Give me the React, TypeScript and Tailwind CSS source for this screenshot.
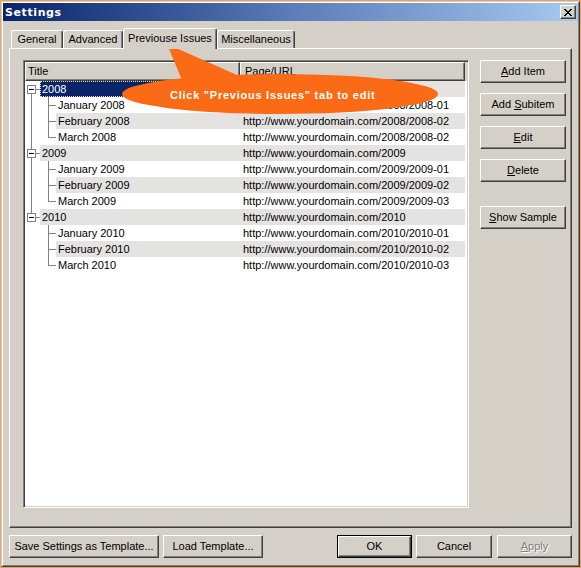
import React from "react";

const raised =
  "border border-t-white border-l-white border-r-[#404040] border-b-[#404040] shadow-[inset_-1px_-1px_0_#808080]";

type Row = {
  t: string;
  u: string;
  parent: boolean;
  first?: boolean;
  hasNext?: boolean;
  parentHasNext?: boolean;
  last?: boolean;
  sel?: boolean;
};

const rows: Row[] = [
  { t: "2008", u: "http://www.yourdomain.com/2008", parent: true, first: true, hasNext: true, sel: true },
  { t: "January 2008", u: "http://www.yourdomain.com/2008/2008-01", parent: false, parentHasNext: true },
  { t: "February 2008", u: "http://www.yourdomain.com/2008/2008-02", parent: false, parentHasNext: true },
  { t: "March 2008", u: "http://www.yourdomain.com/2008/2008-02", parent: false, parentHasNext: true, last: true },
  { t: "2009", u: "http://www.yourdomain.com/2009", parent: true, hasNext: true },
  { t: "January 2009", u: "http://www.yourdomain.com/2009/2009-01", parent: false, parentHasNext: true },
  { t: "February 2009", u: "http://www.yourdomain.com/2009/2009-02", parent: false, parentHasNext: true },
  { t: "March 2009", u: "http://www.yourdomain.com/2009/2009-03", parent: false, parentHasNext: true, last: true },
  { t: "2010", u: "http://www.yourdomain.com/2010", parent: true, hasNext: false },
  { t: "January 2010", u: "http://www.yourdomain.com/2010/2010-01", parent: false, parentHasNext: false },
  { t: "February 2010", u: "http://www.yourdomain.com/2010/2010-02", parent: false, parentHasNext: false },
  { t: "March 2010", u: "http://www.yourdomain.com/2010/2010-03", parent: false, parentHasNext: false, last: true },
];

function TreeGlyph({ r }: { r: Row }) {
  if (r.parent) {
    return (
      <svg width="15" height="16" viewBox="0 0 15 16" shapeRendering="crispEdges" className="shrink-0">
        {!r.first && <rect x="6" y="0" width="1" height="4" fill="#808080" />}
        {r.hasNext && <rect x="6" y="13" width="1" height="3" fill="#808080" />}
        <rect x="2" y="4" width="9" height="9" fill="#808080" />
        <rect x="3" y="5" width="7" height="7" fill="#ffffff" />
        <rect x="4" y="8" width="5" height="1" fill="#000000" />
        <rect x="11" y="8" width="4" height="1" fill="#808080" />
      </svg>
    );
  }
  return (
    <svg width="31" height="16" viewBox="0 0 31 16" shapeRendering="crispEdges" className="shrink-0">
      {r.parentHasNext && <rect x="6" y="0" width="1" height="16" fill="#808080" />}
      <rect x="23" y="0" width="1" height={r.last ? 9 : 16} fill="#808080" />
      <rect x="23" y="8" width="8" height="1" fill="#808080" />
    </svg>
  );
}

function Btn({
  children,
  w,
  className = "",
  isDefault = false,
  disabled = false,
}: {
  children: React.ReactNode;
  w: string;
  className?: string;
  isDefault?: boolean;
  disabled?: boolean;
}) {
  const textCls = disabled ? "text-[#808080] [text-shadow:1px_1px_0_#ffffff]" : "text-black";
  if (isDefault) {
    return (
      <div className={`${w} h-[23px] border border-black ${className}`}>
        <div className={`w-full h-full flex items-center justify-center bg-[#d4d0c8] ${raised} ${textCls}`}>
          {children}
        </div>
      </div>
    );
  }
  return (
    <div className={`${w} h-[23px] flex items-center justify-center bg-[#d4d0c8] ${raised} ${textCls} ${className}`}>
      {children}
    </div>
  );
}

export default function App() {
  return (
    <div
      className="relative w-[581px] h-[568px] border border-[#eca060] bg-[#d4d0c8] text-[11px] leading-[13px] text-black overflow-hidden"
      style={{ fontFamily: '"Liberation Sans", Arial, sans-serif' }}
    >
      <div className="w-full h-full border border-t-[#d4d0c8] border-l-[#d4d0c8] border-r-[#404040] border-b-[#404040]">
        <div className="w-full h-full border border-t-white border-l-white border-r-[#808080] border-b-[#808080] flex flex-col">
          {/* Title bar */}
          <div className="h-[18px] shrink-0 flex items-center justify-between pl-[2px] pr-[2px] bg-linear-to-r from-[#0a246a] via-[#5a7cb8] to-[#a6caf0]">
            <span
              className="text-white font-bold text-[11px] tracking-[0.6px]"
              style={{ fontFamily: '"DejaVu Sans", "Liberation Sans", sans-serif' }}
            >
              Settings
            </span>
            <div className={`w-[16px] h-[14px] bg-[#d4d0c8] ${raised} flex items-center justify-center`}>
              <svg width="8" height="7" viewBox="0 0 8 7" shapeRendering="crispEdges">
                <path d="M0 0h2v1h-2zM6 0h2v1h-2zM1 1h2v1h-2zM5 1h2v1h-2zM2 2h4v1h-4zM3 3h2v1h-2zM2 4h4v1h-4zM1 5h2v1h-2zM5 5h2v1h-2zM0 6h2v1h-2zM6 6h2v1h-2z" fill="#000" />
              </svg>
            </div>
          </div>

          {/* Tabs */}
          <div className="h-[27px] shrink-0 flex items-end pl-[8px]">
            <div className="w-[52px] h-[18px] flex items-center justify-center border-t border-l border-t-white border-l-white border-r border-r-[#404040] shadow-[inset_-1px_0_0_#808080] rounded-t-[3px]">
              General
            </div>
            <div className="w-[60px] h-[18px] flex items-center justify-center border-t border-l border-t-white border-l-white border-r border-r-[#404040] shadow-[inset_-1px_0_0_#808080] rounded-t-[3px]">
              Advanced
            </div>
            <div className="relative z-10 w-[94px] h-[21px] -mb-px pb-[2px] flex items-center justify-center bg-[#d4d0c8] border-t border-l border-t-white border-l-white border-r border-r-[#404040] shadow-[inset_-1px_0_0_#808080] rounded-t-[3px]">
              Previouse Issues
            </div>
            <div className="w-[78px] h-[18px] flex items-center justify-center border-t border-l border-t-white border-l-white border-r border-r-[#404040] shadow-[inset_-1px_0_0_#808080] rounded-t-[3px]">
              Miscellaneous
            </div>
          </div>

          {/* Panel */}
          <div className={`ml-[6px] w-[563px] h-[480px] shrink-0 ${raised} pl-[13px] pt-[11px] flex`}>
            {/* List view */}
            <div className="w-[446px] h-[448px] bg-white p-px border border-t-[#808080] border-l-[#808080] border-r-white border-b-white shadow-[inset_1px_1px_0_#404040,inset_-1px_-1px_0_#d4d0c8] flex flex-col">
              <div className="h-[19px] shrink-0 flex bg-[#d4d0c8]">
                <div className={`w-[215px] h-full flex items-center pl-[2px] ${raised}`}>Title</div>
                <div className={`w-[225px] h-full flex items-center pl-[4px] ${raised}`}>Page/URL</div>
                <div className="flex-1 h-full bg-[#d4d0c8]" />
              </div>
              <div className="flex flex-col">
                {rows.map((r, i) => {
                  const gray = i % 2 === 0;
                  const bg = gray ? "bg-[#e4e3e1]" : "bg-white";
                  return (
                    <div key={i} className="h-[16px] flex w-[440px]">
                      <div className="w-[215px] h-full flex">
                        <TreeGlyph r={r} />
                        {r.sel ? (
                          <div className="flex-1 h-full flex items-center pl-[1px] bg-[#0a246a] text-white border border-dotted border-[#e8e0a8]">
                            {r.t}
                          </div>
                        ) : (
                          <div className={`flex-1 h-full flex items-center pl-[2px] ${bg}`}>{r.t}</div>
                        )}
                      </div>
                      <div className={`w-[225px] h-full flex items-center pl-[3px] ${bg}`}>{r.u}</div>
                    </div>
                  );
                })}
              </div>
            </div>

            {/* Side buttons */}
            <div className="ml-[11px] flex flex-col gap-[10px]">
              <Btn w="w-[86px]">
                <span><span className="underline">A</span>dd Item</span>
              </Btn>
              <Btn w="w-[86px]">
                <span>Add <span className="underline">S</span>ubitem</span>
              </Btn>
              <Btn w="w-[86px]">
                <span><span className="underline">E</span>dit</span>
              </Btn>
              <Btn w="w-[86px]">
                <span><span className="underline">D</span>elete</span>
              </Btn>
              <Btn w="w-[86px]" className="mt-[14px]">
                <span><span className="underline">S</span>how Sample</span>
              </Btn>
            </div>
          </div>

          {/* Bottom buttons */}
          <div className="mt-[7px] ml-[6px] mr-[6px] flex">
            <Btn w="w-[150px]">Save Settings as Template...</Btn>
            <Btn w="w-[100px]" className="ml-[4px]">Load Template...</Btn>
            <Btn w="w-[75px]" className="ml-auto" isDefault>OK</Btn>
            <Btn w="w-[76px]" className="ml-[4px]">Cancel</Btn>
            <Btn w="w-[75px]" className="ml-[5px]" disabled>
              <span><span className="underline">A</span>pply</span>
            </Btn>
          </div>
        </div>
      </div>

      {/* Callout balloon */}
      <div className="absolute left-[115px] top-[40px] w-[330px] h-[80px] pointer-events-none">
        <svg width="330" height="80" viewBox="0 0 330 80" className="absolute left-0 top-0">
          <ellipse cx="164" cy="53" rx="158" ry="20" fill="#fb6a14" />
          <polygon points="51,3 68,44 130,38" fill="#fb6a14" />
        </svg>
        <span className="absolute left-[54px] top-[48px] whitespace-nowrap text-white font-bold text-[11px] leading-[13px] tracking-[0.75px]">
          Click "Previous Issues" tab to edit
        </span>
      </div>
    </div>
  );
}
